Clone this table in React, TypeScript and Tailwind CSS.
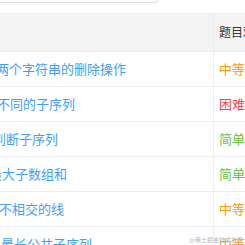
import React from "react";

type Row = { title: string; level: "中等" | "困难" | "简单"; shift: string };

const rows: Row[] = [
  { title: "两个字符串的删除操作", level: "中等", shift: "-ml-[4px]" },
  { title: "不同的子序列", level: "困难", shift: "-ml-[3px]" },
  { title: "判断子序列", level: "简单", shift: "-ml-[7px]" },
  { title: "最大子数组和", level: "简单", shift: "-ml-[11px]" },
  { title: "不相交的线", level: "中等", shift: "-ml-[1px]" },
  { title: "最长公共子序列", level: "中等", shift: "ml-[1px]" },
];

const levelColor: Record<Row["level"], string> = {
  中等: "text-[#ff9900]",
  困难: "text-[#f0474f]",
  简单: "text-[#67c23a]",
};

export default function App() {
  return (
    <div
      className="relative h-[245px] w-[245px] overflow-hidden bg-white"
      style={{ fontFamily: '"Noto Sans CJK SC", "Liberation Sans", sans-serif' }}
    >
      {/* bottom edge of the search box above the table */}
      <div className="h-[3px] w-[158px] rounded-br-[4px] border-b border-r border-[#dcdfe6]" />

      <div className="mt-[10px] w-[300px]">
        <div className="flex h-[39px] border-b border-[#ebeef5] bg-[#f3f3f3]">
          <div className="w-[214px] shrink-0 border-r border-[#ebeef5]" />
          <div className="flex items-center whitespace-nowrap pl-[5px] text-[12px] text-[#333]">
            题目难度
          </div>
        </div>
        {rows.map((r) => (
          <div key={r.title} className="flex h-[35px] border-b border-[#ebeef5]">
            <div className="flex w-[214px] shrink-0 items-center overflow-hidden border-r border-[#ebeef5] whitespace-nowrap text-[13px] text-[#409eff]">
              <span className={r.shift}>{r.title}</span>
            </div>
            <div className={`flex items-center whitespace-nowrap pl-[5px] text-[13px] ${levelColor[r.level]}`}>
              {r.level}
            </div>
          </div>
        ))}
      </div>

      <div className="absolute bottom-[1px] right-[2px] text-[6px] text-[#b8b8b8]">@稀土掘金技术社区</div>
    </div>
  );
}
